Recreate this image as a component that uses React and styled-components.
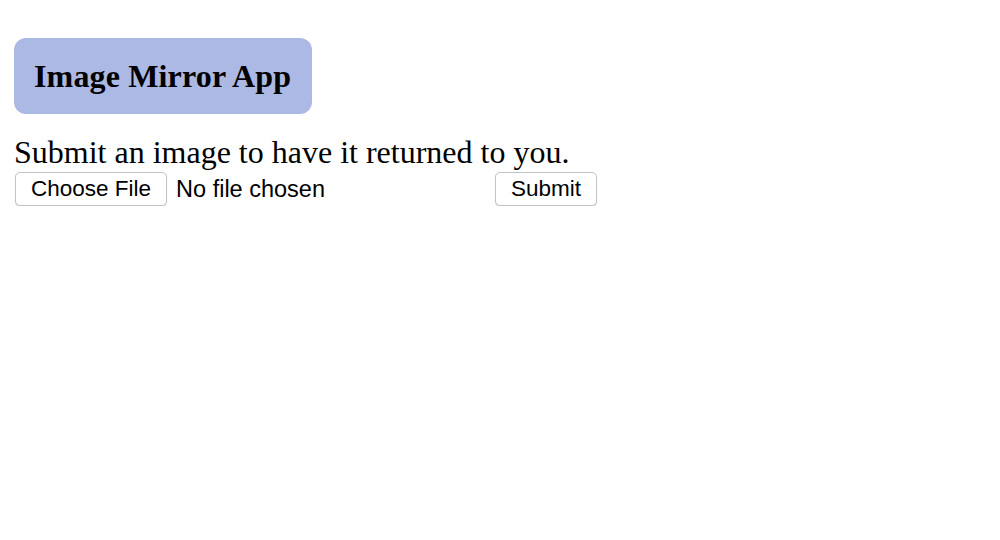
import React from "react";
import styled, { createGlobalStyle } from "styled-components";

const Global = createGlobalStyle`
  html, body { margin: 0; padding: 0; background: #fff; }
  body { font-family: "Liberation Serif", "Times New Roman", serif; color: #000; }
`;

const Page = styled.div`
  padding: 38px 14px 0 14px;
`;

const Header = styled.div`
  display: inline-block;
  background: #adb9e5;
  border-radius: 12px;
  padding: 0 21px 0 20px;
  height: 76px;
  line-height: 76px;
`;

const Title = styled.h1`
  margin: 0;
  font-size: 32px;
  font-weight: bold;
  letter-spacing: 0.15px;
`;

const Lead = styled.p`
  margin: 20px 0 0 0;
  font-size: 32px;
  line-height: 37px;
`;

const Form = styled.form`
  display: flex;
  align-items: center;
  margin-top: 1px;
`;

const FilePart = styled.div`
  display: flex;
  align-items: center;
  width: 480px;
`;

const Btn = styled.button`
  font-family: "Liberation Sans", Arial, sans-serif;
  font-size: 22.5px;
  height: 34px;
  padding: 0 15px;
  background: #fff;
  border: 1px solid #c3c3c3;
  border-radius: 5px;
  box-shadow: 0 1px 1px rgba(0, 0, 0, 0.15);
  color: #000;
  margin: 0 0 0 1px;
`;

const FileText = styled.span`
  font-family: "Liberation Sans", Arial, sans-serif;
  font-size: 23.5px;
  margin-left: 9px;
`;

export default function App() {
  return (
    <>
      <Global />
      <Page>
        <Header><Title>Image Mirror App</Title></Header>
        <Lead>Submit an image to have it returned to you.</Lead>
        <Form onSubmit={(e) => e.preventDefault()}>
          <FilePart>
            <Btn type="button">Choose File</Btn>
            <FileText>No file chosen</FileText>
          </FilePart>
          <Btn type="submit">Submit</Btn>
        </Form>
      </Page>
    </>
  );
}
